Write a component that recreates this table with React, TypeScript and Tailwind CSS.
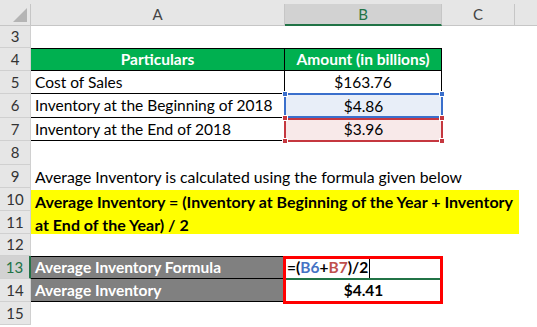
import React from 'react';

const rowHead =
  'w-[31px] shrink-0 flex items-center justify-center bg-[#e6e6e6] border-r border-b border-[#d0d0d0] text-[15px] text-[#333]';

const RowNum = ({ n, active }: { n: number; active?: boolean }) => (
  <div
    className={
      active
        ? 'w-[31px] shrink-0 flex items-center justify-center bg-[#d2d2d2] border-r-2 border-b border-r-[#217346] border-b-[#d0d0d0] text-[15px] text-[#217346]'
        : rowHead
    }
  >
    {n}
  </div>
);

const Corner = ({ className }: { className: string }) => (
  <div className={`absolute w-[6px] h-[6px] border border-white ${className}`} />
);

const App = () => {
  return (
    <div className="relative w-[537px] h-[327px] overflow-hidden bg-white font-[Lato,'Liberation_Sans',sans-serif] text-[15.5px] text-black">
      {/* column headers */}
      <div className="h-[4px] bg-[#e6e6e6]" />
      <div className="flex h-[22px] bg-[#e6e6e6] text-[#444] text-[15px]">
        <div className="w-[31px] shrink-0 border-r border-b border-[#c6c6c6] flex items-end justify-end pr-[3px] pb-[3px]">
          <svg width="14" height="14" viewBox="0 0 14 14">
            <polygon points="14,0 14,14 0,14" fill="#b4b4b4" />
          </svg>
        </div>
        <div className="w-[254px] shrink-0 border-r border-b border-[#c6c6c6] flex items-center justify-center">
          A
        </div>
        <div className="w-[157px] shrink-0 bg-[#d2d2d2] border-r border-[#c6c6c6] border-b-2 border-b-[#217346] flex items-center justify-center text-[#217346]">
          B
        </div>
        <div className="w-[73px] shrink-0 border-r border-b border-[#c6c6c6] flex items-center justify-center">
          C
        </div>
        <div className="flex-1 border-b border-[#c6c6c6]" />
      </div>

      {/* row 3 */}
      <div className="flex h-[22px]">
        <RowNum n={3} />
      </div>

      {/* row 4 */}
      <div className="flex h-[23px]">
        <RowNum n={4} />
        <div className="w-[254px] shrink-0 bg-[#00b050] border-y border-r border-black flex items-center justify-center font-bold text-white">
          Particulars
        </div>
        <div className="w-[157px] shrink-0 bg-[#00b050] border-y border-r border-black flex items-center justify-center font-bold text-white">
          Amount (in billions)
        </div>
      </div>

      {/* row 5 */}
      <div className="flex h-[23px]">
        <RowNum n={5} />
        <div className="w-[254px] shrink-0 border-b border-r border-black flex items-center pl-[4px] pt-[1px]">
          Cost of Sales
        </div>
        <div className="w-[157px] shrink-0 border-r border-black flex items-center justify-center pt-[1px]">
          $163.76
        </div>
      </div>

      {/* row 6 */}
      <div className="flex h-[24px]">
        <RowNum n={6} />
        <div className="w-[254px] shrink-0 border-b border-black flex items-center pl-[4px] pt-[1px]">
          Inventory at the Beginning of 2018
        </div>
        <div className="relative w-[157px] shrink-0 bg-[#e8eef8] flex items-center justify-center pt-[1px]">
          $4.86
          <div className="absolute -left-[1px] -top-[1px] -right-[1px] bottom-0 border-2 border-[#3a6fcc]" />
          <Corner className="bg-[#3a6fcc] -left-[3px] -top-[3px]" />
          <Corner className="bg-[#3a6fcc] -right-[3px] -top-[3px]" />
        </div>
      </div>

      {/* row 7 */}
      <div className="flex h-[23px]">
        <RowNum n={7} />
        <div className="w-[254px] shrink-0 border-b border-black flex items-center pl-[4px] pt-[1px]">
          Inventory at the End of 2018
        </div>
        <div className="relative w-[157px] shrink-0 bg-[#f8e9e9] flex items-center justify-center pt-[1px]">
          $3.96
          <div className="absolute -left-[1px] top-0 -right-[1px] -bottom-[1px] border-2 border-[#c5373f]" />
          <Corner className="bg-[#c5373f] -left-[3px] -top-[3px]" />
          <Corner className="bg-[#c5373f] -right-[3px] -top-[3px]" />
          <Corner className="bg-[#c5373f] -left-[3px] -bottom-[3px]" />
          <Corner className="bg-[#c5373f] -right-[3px] -bottom-[3px]" />
        </div>
      </div>

      {/* row 8 */}
      <div className="flex h-[24px]">
        <RowNum n={8} />
      </div>

      {/* row 9 */}
      <div className="flex h-[23px]">
        <RowNum n={9} />
        <div className="flex items-center pl-[4px] pt-[1px] whitespace-nowrap text-[15.8px]">
          Average Inventory is calculated using the formula given below
        </div>
      </div>

      {/* rows 10-11 merged */}
      <div className="flex h-[46px]">
        <div className="flex flex-col">
          <div className={`${rowHead} h-[23px]`}>10</div>
          <div className={`${rowHead} h-[23px]`}>11</div>
        </div>
        <div className="flex flex-col">
          <div className="h-[2px]" />
          <div className="w-[488px] h-[44px] bg-[#ffff00] font-bold pl-[4px] leading-[23px] whitespace-nowrap text-[16px]">
            Average Inventory = (Inventory at Beginning of the Year + Inventory
            <br />
            at End of the Year) / 2
          </div>
        </div>
      </div>

      {/* row 12 */}
      <div className="flex h-[22px]">
        <RowNum n={12} />
      </div>

      {/* row 13 */}
      <div className="flex h-[23px]">
        <RowNum n={13} active />
        <div className="w-[254px] shrink-0 bg-[#808080] border-y border-r border-black flex items-center pl-[4px] pt-[1px] font-bold text-white">
          Average Inventory Formula
        </div>
        <div className="relative w-[157px] shrink-0 flex items-center pl-[2px] pt-[1px] font-bold">
          <span>=(</span>
          <span className="text-[#4472c4]">B6</span>
          <span>+</span>
          <span className="text-[#c0504d]">B7</span>
          <span>)/2</span>
          <span className="ml-[1px] w-px h-[19px] bg-black" />
          <div className="absolute left-[1px] right-[1px] bottom-[-1px] h-[2px] bg-[#217346]" />
        </div>
      </div>

      {/* row 14 */}
      <div className="flex h-[23px]">
        <RowNum n={14} />
        <div className="w-[254px] shrink-0 bg-[#808080] border-b border-r border-black flex items-center pl-[4px] pt-[1px] font-bold text-white">
          Average Inventory
        </div>
        <div className="w-[157px] shrink-0 flex items-center justify-center pt-[1px] font-bold">
          $4.41
        </div>
      </div>

      {/* row 15 */}
      <div className="flex h-[23px]">
        <RowNum n={15} />
      </div>

      {/* highlight box around B13:B14 */}
      <div className="absolute left-[283px] top-[256px] w-[160px] h-[48px] border-[3px] border-[#ff0000]" />
    </div>
  );
};

export default App;
